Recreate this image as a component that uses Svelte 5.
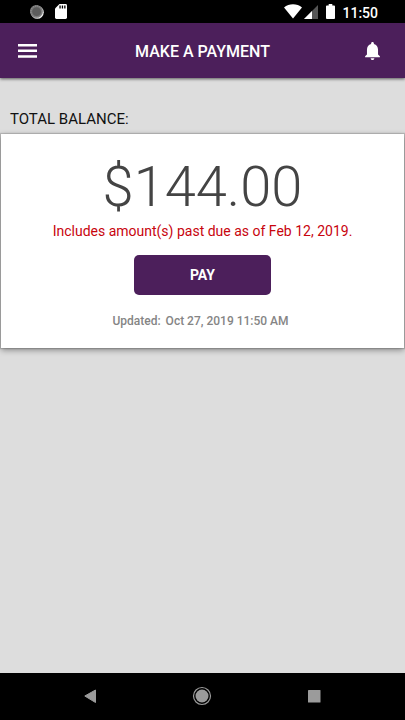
<script>
	let title = 'MAKE A PAYMENT';
	let balance = '$144.00';
	let pastDue = 'Feb 12, 2019';
	let updated = 'Oct 27, 2019 11:50 AM';
	let time = '11:50';
</script>

<div class="screen">
	<div class="status-bar">
		<div class="status-group">
			<svg width="14" height="14" viewBox="0 0 14 14">
				<circle cx="7.3" cy="7.3" r="6.5" fill="#eee" />
				<circle cx="6.4" cy="6.4" r="6.4" fill="#777" />
				<circle cx="6.5" cy="6.5" r="5.6" fill="none" stroke="#999" stroke-dasharray="1 1.2" />
				<circle cx="6.6" cy="6.6" r="4.4" fill="#5c5c5c" />
			</svg>
			<svg class="card-icon" width="12" height="15" viewBox="0 0 12 15">
				<path d="M4.5 0H10.6Q12 0 12 1.4V13.6Q12 15 10.6 15H1.4Q0 15 0 13.6V4.5Z" fill="#fff" />
				<path d="M4.4 1.6h1.3v2.8H4.4zM6.8 1.6h1.3v2.8H6.8zM9.2 1.6h1.3v2.8H9.2z" fill="#000" />
			</svg>
		</div>
		<div class="status-group">
			<svg width="18" height="15" viewBox="0 0 18 15">
				<path d="M0 3.4C5 -0.8 13 -0.8 18 3.4L9 14.5Z" fill="#fff" />
			</svg>
			<svg class="signal" width="14" height="14" viewBox="0 0 14 14">
				<path d="M0 14L14 0V14Z" fill="#555" />
				<path d="M0 14L8 6V14Z" fill="#fff" />
			</svg>
			<svg class="battery" width="9" height="15" viewBox="0 0 9 15">
				<path d="M2.7 0H6.3V1.5H8.1Q9 1.5 9 2.4V14.1Q9 15 8.1 15H.9Q0 15 0 14.1V2.4Q0 1.5 .9 1.5H2.7Z" fill="#fff" />
			</svg>
			<span class="time">{time}</span>
		</div>
	</div>

	<header>
		<button class="icon-button" aria-label="Menu">
			<svg width="19" height="14" viewBox="0 0 19 14">
				<path d="M0 0H19V2.5H0ZM0 5.6H19V8.1H0ZM0 11.2H19V13.7H0Z" fill="#fff" />
			</svg>
		</button>
		<h1>{title}</h1>
		<button class="icon-button" aria-label="Notifications">
			<svg width="15" height="18" viewBox="4 2.5 16 19.5">
				<path d="M12 22c1.1 0 2-.9 2-2h-4c0 1.1.89 2 2 2zm6-6v-5c0-3.07-1.64-5.64-4.5-6.32V4c0-.83-.67-1.5-1.5-1.5s-1.5.67-1.5 1.5v.68C7.63 5.36 6 7.92 6 11v5l-2 2v1h16v-1l-2-2z" fill="#fff" />
			</svg>
		</button>
	</header>

	<main>
		<h2>TOTAL BALANCE:</h2>
		<section class="card">
			<p class="amount">{balance}</p>
			<p class="past-due">Includes amount(s) past due as of {pastDue}.</p>
			<button class="pay">PAY</button>
			<p class="updated"><span>Updated:</span><span>{updated}</span></p>
		</section>
	</main>

	<nav>
		<button aria-label="Back">
			<svg width="20" height="20" viewBox="0 0 20 20">
				<path d="M4.8 10L15.5 4V16.5Z" fill="#9b9b9b" stroke="#9b9b9b" stroke-linejoin="round" />
			</svg>
		</button>
		<button aria-label="Home">
			<svg width="20" height="20" viewBox="0 0 20 20">
				<circle cx="10" cy="10" r="8.5" fill="none" stroke="#9b9b9b" stroke-width="1.2" />
				<circle cx="10" cy="10" r="6.5" fill="#9b9b9b" />
			</svg>
		</button>
		<button aria-label="Recent apps">
			<svg width="20" height="20" viewBox="0 0 20 20">
				<rect x="4" y="4" width="12.5" height="12.5" rx="0.6" fill="#9b9b9b" />
			</svg>
		</button>
	</nav>
</div>

<style>
	:global(body) {
		margin: 0;
		background: #ddd;
	}
	.screen {
		display: flex;
		flex-direction: column;
		min-height: 100vh;
		background: #ddd;
		font-family: Roboto, sans-serif;
	}
	svg {
		display: block;
	}
	button {
		border: none;
		padding: 0;
		background: none;
		font-family: inherit;
		cursor: pointer;
	}
	h1, h2, p {
		margin: 0;
	}
	.status-bar {
		display: flex;
		justify-content: space-between;
		align-items: center;
		height: 23px;
		padding: 0 27px 0 30px;
		background: #000;
		color: #fff;
	}
	.status-group {
		display: flex;
		align-items: center;
	}
	.card-icon {
		margin-left: 11px;
	}
	.signal {
		margin-left: 2px;
	}
	.battery {
		margin-left: 8px;
	}
	.time {
		margin-left: 7px;
		padding-top: 2px;
		font-size: 14px;
		line-height: 20px;
		font-weight: 500;
	}
	header {
		display: flex;
		justify-content: space-between;
		align-items: center;
		height: 55px;
		padding: 0 21px 0 15px;
		background: #4c1f5b;
		box-shadow: 0 1px 3px rgba(0, 0, 0, 0.6);
	}
	.icon-button {
		display: flex;
		justify-content: center;
		align-items: center;
		width: 24px;
		height: 40px;
	}
	h1 {
		flex: 1;
		padding: 2px 0 0 6px;
		color: #fff;
		font-size: 16px;
		line-height: 20px;
		font-weight: 500;
		text-align: center;
	}
	main {
		flex: 1;
		padding-top: 32px;
	}
	h2 {
		padding: 0 10px;
		color: #111;
		font-size: 15px;
		line-height: 18px;
		font-weight: 400;
	}
	.card {
		display: flex;
		flex-direction: column;
		align-items: center;
		margin: 6px 1px 0;
		padding: 21px 0 17px;
		background: #fff;
		box-shadow: 0 0 1px 1px rgba(0, 0, 0, 0.15), 0 2px 6px rgba(0, 0, 0, 0.4);
	}
	.amount {
		color: #444;
		font-size: 56px;
		line-height: 64px;
		font-weight: 300;
	}
	.past-due {
		margin-top: 2px;
		color: #c8040e;
		font-size: 14px;
		line-height: 20px;
	}
	.pay {
		width: 34%;
		height: 40px;
		margin-top: 14px;
		border-radius: 5px;
		background: #4c1f5b;
		color: #fff;
		font-size: 14px;
		font-weight: 700;
	}
	.updated {
		display: flex;
		gap: 5px;
		margin-top: 16px;
		padding-right: 4px;
		color: #858585;
		font-size: 12px;
		line-height: 20px;
		font-weight: 500;
	}
	nav {
		display: flex;
		justify-content: center;
		align-items: center;
		gap: 92px;
		height: 45px;
		padding: 0 2px 2px 0;
		background: #000;
	}
</style>
